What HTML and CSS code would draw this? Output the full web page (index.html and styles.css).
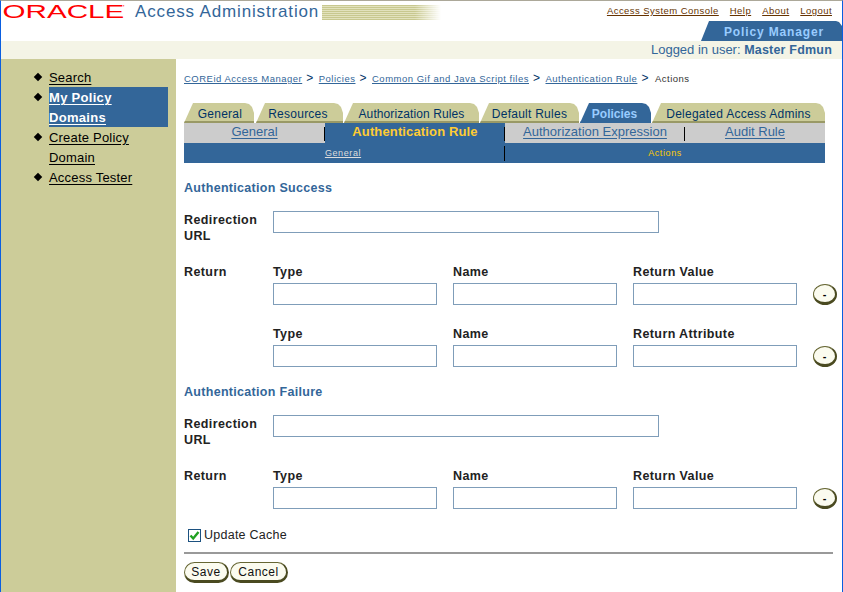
FILE: index.html
```html
<!DOCTYPE html>
<html lang="en">
<head>
<meta charset="utf-8">
<title>Access Administration</title>
<link rel="stylesheet" href="styles.css">
</head>
<body>
<div class="page">
  <header class="header">
    <div class="brand-row">
      <div class="logo"><span class="logo-text">ORACLE</span><span class="logo-mark">'</span></div>
      <span class="product">Access Administration</span>
      <span class="stripes"></span>
      <nav class="toplinks"><a>Access System Console</a><a>Help</a><a>About</a><a>Logout</a></nav>
    </div>
    <div class="app-row"><div class="app-tab">Policy Manager</div></div>
    <div class="user-row">Logged in user: <b>Master Fdmun</b></div>
  </header>
  <div class="layout">
    <aside class="sidebar">
      <ul class="menu">
        <li class="menu-item"><a>Search</a></li>
        <li class="menu-item current"><a>My Policy Domains</a></li>
        <li class="menu-item"><a>Create Policy Domain</a></li>
        <li class="menu-item"><a>Access Tester</a></li>
      </ul>
    </aside>
    <main class="main">
      <div class="crumbs"><a>COREid Access Manager</a><span class="sep">&gt;</span><a>Policies</a><span class="sep">&gt;</span><a>Common Gif and Java Script files</a><span class="sep">&gt;</span><a>Authentication Rule</a><span class="sep">&gt;</span><span class="crumb-here">Actions</span></div>
      <div class="tabs">
        <div class="tab t1">General</div>
        <div class="tab t2">Resources</div>
        <div class="tab t3">Authorization Rules</div>
        <div class="tab t4">Default Rules</div>
        <div class="tab t5 active">Policies</div>
        <div class="tab t6">Delegated Access Admins</div>
      </div>
      <div class="subtabs">
        <div class="sub s1"><a>General</a></div>
        <div class="sub s2 active">Authentication Rule</div>
        <div class="sub s3"><a>Authorization Expression</a></div>
        <div class="sub s4"><a>Audit Rule</a></div>
      </div>
      <div class="subsub">
        <div class="ss ss1"><a>General</a></div>
        <div class="ss ss2">Actions</div>
      </div>

      <h2 class="section-title first">Authentication Success</h2>
      <div class="row redirect">
        <label class="row-label">Redirection URL</label>
        <input class="field wide" type="text">
      </div>
      <div class="row ret">
        <div class="row-label">Return</div>
        <div class="col"><label>Type</label><input class="field" type="text"></div>
        <div class="col"><label>Name</label><input class="field" type="text"></div>
        <div class="col"><label>Return Value</label><input class="field" type="text"></div>
        <button class="minus" type="button">-</button>
      </div>
      <div class="row ret second">
        <div class="row-label"></div>
        <div class="col"><label>Type</label><input class="field" type="text"></div>
        <div class="col"><label>Name</label><input class="field" type="text"></div>
        <div class="col"><label>Return Attribute</label><input class="field" type="text"></div>
        <button class="minus" type="button">-</button>
      </div>

      <h2 class="section-title">Authentication Failure</h2>
      <div class="row redirect">
        <label class="row-label">Redirection URL</label>
        <input class="field wide" type="text">
      </div>
      <div class="row ret last">
        <div class="row-label">Return</div>
        <div class="col"><label>Type</label><input class="field" type="text"></div>
        <div class="col"><label>Name</label><input class="field" type="text"></div>
        <div class="col"><label>Return Value</label><input class="field" type="text"></div>
        <button class="minus" type="button">-</button>
      </div>

      <div class="cache">
        <span class="check"><svg width="11" height="11" viewBox="0 0 11 11"><path d="M1.5 5.5 L4.2 8.5 L9.5 2" fill="none" stroke="#21a121" stroke-width="2.4"/></svg></span>
        <span>Update Cache</span>
      </div>
      <hr class="rule">
      <div class="actions">
        <button class="pill save" type="button">Save</button>
        <button class="pill cancel" type="button">Cancel</button>
      </div>
    </main>
  </div>
</div>
</body>
</html>
```

FILE: styles.css
```css
* { box-sizing: border-box; }
html, body { margin: 0; padding: 0; background: #fff; }
body { font-family: "Liberation Sans", Arial, sans-serif; }
.page {
  width: 843px; height: 592px; overflow: hidden;
  border-top: 1px solid #aca899;
  border-left: 1px solid #0a5ee0;
  border-right: 1px solid #0a5ee0;
  display: flex; flex-direction: column;
}
a { cursor: pointer; }

/* Header */
.header { flex: none; height: 58px; display: flex; flex-direction: column; border-bottom: 2px solid #999; }
.brand-row { height: 20px; display: flex; align-items: flex-start; }
.logo { width: 127px; height: 20px; padding-top: 1px; flex: none; display: flex; align-items: flex-start; color: #f00; }
.logo-text {
  display: inline-block; width: 122px; flex: none; padding-left: 1px;
  font-size: 18.5px; line-height: 20px; white-space: nowrap;
  transform: scaleX(1.6); transform-origin: 0 50%;
}
.logo-mark { font-size: 8px; line-height: 12px; margin-left: 0; }
.product { margin: 1px 0 0 7px; font-size: 17px; line-height: 20px; letter-spacing: .85px; color: #336699; white-space: nowrap; }
.stripes {
  width: 119px; height: 15px; margin: 4px 0 0 3px; flex: none;
  background:
    linear-gradient(to right, rgba(255,255,255,0) 78%, #fff 100%),
    repeating-linear-gradient(to bottom, #c8c88f 0 1px, #e2e2bd 1px 2px);
}
.toplinks { margin-left: auto; margin-right: 10px; margin-top: 3px; display: flex; gap: 11px; font-size: 9.5px; line-height: 13px; letter-spacing: .45px; }
.toplinks a { color: #663300; text-decoration: underline; white-space: nowrap; }
.app-row { height: 20px; display: flex; justify-content: flex-end; }
.app-tab {
  width: 141px; height: 20px; padding: 2px 0 0 23px;
  background: #336699; color: #99ccff; font-weight: bold; font-size: 12px; line-height: 18px; letter-spacing: .85px;
  clip-path: polygon(0 100%, 8px 0, calc(100% - 6px) 0, calc(100% - 3px) 1px, 100% 5px, 100% 100%);
}
.user-row { flex: 1; background: #f4f4e6; text-align: right; padding-right: 10px; color: #336699; font-size: 13px; line-height: 17px; }
.user-row b { letter-spacing: .2px; font-size: 12.5px; }

/* Layout */
.layout { flex: 1; display: flex; min-height: 0; }
.sidebar { flex: none; width: 175px; background: #cccc99; padding-top: 8px; }
.menu { list-style: none; margin: 0; padding: 0 8px 0 48px; font-size: 13px; line-height: 20px; letter-spacing: .2px; }
.menu-item { position: relative; }
.menu-item::before {
  content: ""; position: absolute; left: -14px; top: 7px; width: 6px; height: 6px; background: #000; transform: rotate(45deg);
}
.menu-item a { position: relative; top: 1px; color: #000; text-decoration: underline; text-underline-offset: 2px; }
.current { background: #336699; }
.current a { color: #fff; font-weight: bold; letter-spacing: .3px; }
.menu-item.current { padding-right: 30px; }
.main { flex: 1; min-width: 0; padding: 0 0 0 8px; }

/* Breadcrumbs */
.crumbs { height: 44px; padding-top: 11px; font-size: 9.5px; line-height: 16px; letter-spacing: .5px; color: #003366; white-space: nowrap; }
.crumbs a { color: #336699; text-decoration: underline; }
.crumbs .sep { font-size: 12px; margin: 0 5px 0 4px; color: #003366; }
.crumb-here { color: #333; margin-left: 1px; }

/* Tabs */
.tabs { display: flex; gap: 0; height: 20px; width: 641px; position: relative; }
.tab {
  height: 20px; text-align: center; padding: 3px 0 0 0; background: #cccc99;
  border-bottom: 2px solid #999966; color: #003366;
  font-size: 12px; line-height: 16px; letter-spacing: .25px; white-space: nowrap; flex: none;
  clip-path: polygon(0 100%, 9px 0, calc(100% - 9px) 0, calc(100% - 5px) 1px, calc(100% - 2px) 4px, 100% 10px, 100% 100%);
}
.t1 { width: 70px; padding-left: 2px; }
.t2 { width: 87px; margin-left: 2px; padding-right: 3px; }
.t3 { width: 135px; margin-left: 1px; letter-spacing: .1px; }
.t4 { width: 99px; margin-left: 1px; }
.t5 { width: 71px; margin-left: 1px; padding-right: 2px; }
.t6 { width: 173px; margin-left: 1px; }
.tab.active { background: #336699; border-bottom-color: #336699; color: #99ccff; font-weight: bold; letter-spacing: 0; }

.subtabs { display: flex; height: 20px; width: 641px; background: #cccccc; font-size: 13px; line-height: 17px; }
.sub { text-align: center; position: relative; }
.sub a { color: #336699; text-decoration: underline; text-underline-offset: 2px; }
.s1 { width: 141px; }
.s2 { width: 180px; background: #336699; color: #ffcc33; font-weight: bold; letter-spacing: .14px; }
.s3 { width: 180px; }
.s4 { width: 140px; }
.s1::after, .s2::after, .s3::after {
  content: ""; position: absolute; right: 0; top: 4px; width: 1px; height: 14px; background: #000;
}
.subsub { display: flex; height: 20px; width: 641px; background: #336699; font-size: 9px; line-height: 20px; letter-spacing: .6px; }
.ss { text-align: center; position: relative; }
.ss1 { width: 321px; padding-right: 3px; }
.ss1 a { color: #ddd; text-decoration: underline; }
.ss2 { width: 320px; color: #ffcc00; }
.ss1::after { content: ""; position: absolute; right: 0; top: 3px; width: 1px; height: 15px; background: #000; }

/* Form */
.section-title { margin: 0; height: 16px; padding-top: 1px; font-size: 12.5px; line-height: 16px; font-weight: bold; letter-spacing: .3px; color: #336699; }
.section-title.first { margin-top: 16px; }
.row { display: flex; }
.row-label, .col label { padding-top: 1px; font-size: 12.5px; line-height: 16px; font-weight: bold; letter-spacing: .4px; color: #222; }
.row-label { flex: none; width: 89px; }
.redirect { margin-top: 16px; height: 52px; }
.field { display: block; width: 164px; height: 22px; margin: 0; border: 1px solid #7f9db9; background: #fff; padding: 0; }
.field.wide { width: 386px; }
.ret { height: 62px; align-items: flex-start; }
.ret.second { height: 58px; }
.ret.last { height: 60px; }
.col { flex: none; width: 164px; margin-right: 16px; }
.col label { display: block; height: 20px; }
.minus {
  flex: none; width: 24px; height: 21px; margin-top: 21px; padding: 0;
  border: 1px solid #666633; border-right: 2px solid #4a4a20; border-bottom: 3px solid #4a4a20; border-radius: 50%;
  background: #fbfbef; font: bold 11px/14px "Liberation Sans", sans-serif; color: #000;
}
.cache { display: flex; align-items: center; gap: 3px; height: 16px; margin: 0 0 0 4px; font-size: 12.5px; letter-spacing: .25px; color: #222; }
.check { width: 13px; height: 13px; border: 1px solid #1c5180; background: #fff; display: flex; align-items: center; justify-content: center; }
.rule { width: 649px; height: 2px; margin: 9px 0 0; border: 0; background: #999; }
.actions { display: flex; gap: 1px; margin-top: 8px; }
.pill {
  height: 21px; padding: 0; border: 1px solid #666633; border-right: 2px solid #4a4a20; border-bottom: 3px solid #4a4a20;
  border-radius: 11px; background: #fbfbef; color: #111; font: 12px/14px "Liberation Sans", sans-serif; letter-spacing: .5px;
}
.save { width: 45px; }
.cancel { width: 58px; }
```
